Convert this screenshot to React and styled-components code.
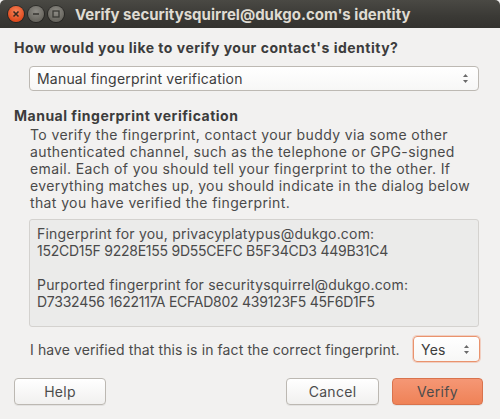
import React from "react";
import styled, { createGlobalStyle } from "styled-components";

const Global = createGlobalStyle`
  html, body { margin: 0; padding: 0; }
  body {
    width: 500px; height: 419px; overflow: hidden;
    background: #f2f1f0;
    font-family: Inter, "Noto Sans", sans-serif;
    font-size: 14px;
    color: #3c3c3c;
  }
`;

const Window = styled.div`
  width: 500px;
  height: 419px;
  display: flex;
  flex-direction: column;
  background: #f2f1f0;
`;

const TitleBar = styled.div`
  height: 28px;
  flex: none;
  display: flex;
  align-items: center;
  padding-left: 8px;
  gap: 3px;
  background: linear-gradient(#4a4944, #3a3935 60%, #34332f);
  border-radius: 5px 5px 0 0;
`;

const WinButton = styled.div`
  width: 16px;
  height: 16px;
  border-radius: 50%;
  display: flex;
  align-items: center;
  justify-content: center;
  background: ${(p) =>
    p.$close
      ? "radial-gradient(circle at 50% 35%, #f7845a, #e04b1e 70%)"
      : "radial-gradient(circle at 50% 35%, #8e8c86, #68665f 70%)"};
  box-shadow: 0 0 0 1px rgba(0, 0, 0, 0.35);
  margin-right: 1px;
`;

const Title = styled.div`
  margin-left: 7px;
  color: #dfdbd2;
  font-weight: bold;
  font-size: 15px;
`;

const Content = styled.div`
  display: flex;
  flex-direction: column;
  padding: 11px 21px 0 14px;
`;

const Heading = styled.div`
  font-weight: bold;
  line-height: 17px;
  letter-spacing: 0.5px;
  margin-top: ${(p) => p.$mt || 0}px;
`;

const Indent = styled.div`
  margin-left: 15px;
  display: flex;
  flex-direction: column;
`;

const Combo = styled.div`
  height: ${(p) => p.$h || 25}px;
  box-sizing: border-box;
  display: flex;
  align-items: center;
  justify-content: space-between;
  padding: 0 9px 0 7px;
  border: 1px solid ${(p) => (p.$focus ? "#e9936d" : "#bdb9b3")};
  box-shadow: ${(p) => (p.$focus ? "0 0 0 1px rgba(240,130,90,0.3)" : "none")};
  border-radius: 4px;
  background: linear-gradient(#ffffff, #f7f7f6);
  color: #3c3c3c;
  letter-spacing: 0.2px;
  margin-top: ${(p) => p.$mt || 0}px;
  margin-right: ${(p) => p.$mr || 0}px;
  width: ${(p) => p.$w || "auto"};
`;

const Paragraph = styled.div`
  line-height: 17px;
  margin-top: 2px;
  margin-left: 16px;
  letter-spacing: 0.38px;
  color: #4a4a4a;
`;

const FingerBox = styled.div`
  margin-top: 8px;
  margin-left: 15px;
  height: 108px;
  box-sizing: border-box;
  border: 1px solid #d4d2cf;
  border-radius: 3px;
  background: #ebebea;
  padding: 5px 7px;
  line-height: 17px;
  color: #4a4a4a;
`;

const BoxLine = styled.div`
  letter-spacing: ${(p) => (p.$hex ? "-0.25px" : "0.2px")};
`;

const Blank = styled.div`
  height: 17px;
`;

const VerifyRow = styled.div`
  margin-top: 9px;
  margin-left: 16px;
  display: flex;
  align-items: center;
  justify-content: space-between;
  color: #4a4a4a;
  letter-spacing: 0.1px;
`;

const ButtonRow = styled.div`
  margin-top: 16px;
  display: flex;
  align-items: center;
  margin-right: -4px;
`;

const Button = styled.div`
  width: ${(p) => p.$w}px;
  height: 27px;
  box-sizing: border-box;
  border-radius: 4px;
  display: flex;
  align-items: center;
  justify-content: center;
  color: #4c4c4c;
  letter-spacing: 0.3px;
  border: 1px solid ${(p) => (p.$primary ? "#d9734d" : "#bcb8b2")};
  background: ${(p) =>
    p.$primary
      ? "linear-gradient(#f59775, #ef8257)"
      : "linear-gradient(#ffffff, #f1f0ef)"};
  box-shadow: 0 1px 0 rgba(0, 0, 0, 0.06);
  margin-left: ${(p) => p.$ml || 0}px;
`;

const Spacer = styled.div`
  flex: 1;
`;

const Arrows = () => (
  <svg width="7" height="11" viewBox="0 0 7 11">
    <path d="M3.5 1 L6 4 L1 4 Z" fill="#6a6a6a" />
    <path d="M3.5 10 L6 7 L1 7 Z" fill="#6a6a6a" />
  </svg>
);

export default function App() {
  return (
    <>
      <Global />
      <Window>
        <TitleBar>
          <WinButton $close>
            <svg width="8" height="8" viewBox="0 0 8 8">
              <path d="M1.5 1.5 L6.5 6.5 M6.5 1.5 L1.5 6.5" stroke="#3a2a20" strokeWidth="1.6" />
            </svg>
          </WinButton>
          <WinButton>
            <svg width="8" height="8" viewBox="0 0 8 8">
              <path d="M1 4 L7 4" stroke="#3a3935" strokeWidth="1.6" />
            </svg>
          </WinButton>
          <WinButton>
            <svg width="8" height="8" viewBox="0 0 8 8">
              <rect x="1" y="1" width="6" height="6" fill="none" stroke="#3a3935" strokeWidth="1.3" />
            </svg>
          </WinButton>
          <Title>Verify securitysquirrel@dukgo.com's identity</Title>
        </TitleBar>
        <Content>
          <Heading>How would you like to verify your contact's identity?</Heading>
          <Indent>
            <Combo $mt={10}>
              <span>Manual fingerprint verification</span>
              <Arrows />
            </Combo>
          </Indent>
          <Heading $mt={16}>Manual fingerprint verification</Heading>
          <Paragraph>
            To verify the fingerprint, contact your buddy via some other
            <br />
            authenticated channel, such as the telephone or GPG-signed
            <br />
            email. Each of you should tell your fingerprint to the other. If
            <br />
            everything matches up, you should indicate in the dialog below
            <br />
            that you have verified the fingerprint.
          </Paragraph>
          <FingerBox>
            <BoxLine>Fingerprint for you, privacyplatypus@dukgo.com:</BoxLine>
            <BoxLine $hex>152CD15F 9228E155 9D55CEFC B5F34CD3 449B31C4</BoxLine>
            <Blank />
            <BoxLine>Purported fingerprint for securitysquirrel@dukgo.com:</BoxLine>
            <BoxLine $hex>D7332456 1622117A ECFAD802 439123F5 45F6D1F5</BoxLine>
          </FingerBox>
          <VerifyRow>
            <span>I have verified that this is in fact the correct fingerprint.</span>
            <Combo $focus $w="67px" $h={26} $mr={-1}>
              <span>Yes</span>
              <Arrows />
            </Combo>
          </VerifyRow>
          <ButtonRow>
            <Button $w={92}>Help</Button>
            <Spacer />
            <Button $w={93}>Cancel</Button>
            <Button $w={91} $primary $ml={13}>
              Verify
            </Button>
          </ButtonRow>
        </Content>
      </Window>
    </>
  );
}
